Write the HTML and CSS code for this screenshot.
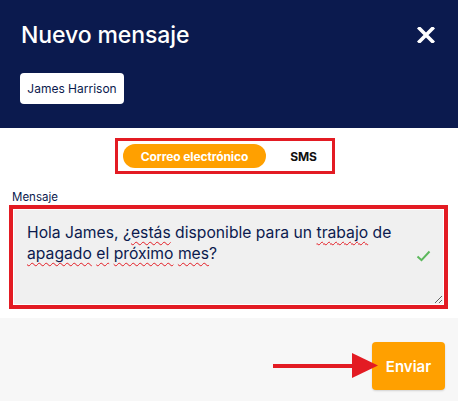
FILE: index.html
```html
<!DOCTYPE html>
<html lang="es">
<head>
<meta charset="utf-8">
<link rel="stylesheet" href="styles.css">
</head>
<body>
<div class="modal">
  <header class="head">
    <div class="head-row">
      <h1 class="title">Nuevo mensaje</h1>
      <svg class="close" width="18" height="16" viewBox="0 0 18 16"><path d="M2.5 1.5 L15.5 14.5 M15.5 1.5 L2.5 14.5" stroke="#fff" stroke-width="3.6" stroke-linecap="square"/></svg>
    </div>
    <span class="chip">James Harrison</span>
  </header>
  <div class="toggle-wrap">
    <div class="toggle">
      <span class="opt active">Correo electrónico</span>
      <span class="opt sms">SMS</span>
    </div>
  </div>
  <div class="field">
    <label class="label">Mensaje</label>
    <div class="area-outline">
      <div class="area">Hola James, ¿<span class="sp">estás</span> disponible para un <span class="sp">trabajo</span> de <span class="sp">apagado</span> <span class="sp">el</span> <span class="sp">próximo</span> <span class="sp">mes</span>?
        <svg class="check" width="15" height="12" viewBox="0 0 15 12"><path d="M1.5 6.5 L5.5 10.2 L13.5 1.5" fill="none" stroke="#5cb85c" stroke-width="2"/></svg>
      </div>
    </div>
  </div>
  <footer class="foot">
    <svg class="arrow" width="106" height="26" viewBox="0 0 106 26"><rect x="0" y="11" width="82" height="4" fill="#e31b23"/><polygon points="79,0 105,12.5 79,25" fill="#e31b23"/></svg>
    <button class="send">Enviar</button>
  </footer>
</div>
</body>
</html>
```
FILE: styles.css
```css
* { box-sizing: border-box; }
html, body { margin: 0; padding: 0; }
body {
  width: 458px;
  height: 401px;
  background: #fff;
  font-family: Inter, "Noto Sans", sans-serif;
  overflow: hidden;
}
.modal { display: flex; flex-direction: column; height: 401px; }
.head {
  background: #0b1a4e;
  height: 128px;
  padding: 21px 21px 0 21px;
  display: flex;
  flex-direction: column;
  align-items: flex-start;
}
.head-row {
  width: 100%;
  display: flex;
  justify-content: space-between;
  align-items: center;
}
.title {
  margin: 0;
  color: #fff;
  font-size: 23px;
  font-weight: 500;
  line-height: 28px;
  letter-spacing: -0.1px;
}
.close { margin-right: 2px; }
.chip {
  margin-top: 24px;
  margin-left: -1px;
  background: #fff;
  color: #0b1a4e;
  font-size: 12px;
  border-radius: 4px;
  height: 31px;
  width: 104px;
  display: flex;
  align-items: center;
  justify-content: center;
}
.toggle-wrap {
  display: flex;
  justify-content: center;
  padding-top: 10px;
  padding-right: 8px;
}
.toggle {
  border: 3px solid #e31b23;
  width: 220px;
  height: 36px;
  padding: 3px 5px;
  display: flex;
  align-items: center;
}
.opt {
  font-size: 12px;
  font-weight: 700;
  color: #111;
  height: 24px;
  display: flex;
  align-items: center;
  justify-content: center;
  flex: 1;
  letter-spacing: -0.1px;
}
.opt.sms { padding-left: 14px; }
.opt.active {
  flex: 0 0 143px;
  background: #ffa000;
  color: #fff;
  border-radius: 12px;
}
.field { padding: 16px 10px 0 9px; }
.label {
  display: block;
  font-size: 11.5px;
  color: #0b1a4e;
  margin-left: 3px;
  line-height: 14px;
  margin-bottom: 1px;
}
.area-outline {
  border: 4px solid #e31b23;
  height: 104px;
}
.area {
  position: relative;
  height: 96px;
  background: #f0f0f0;
  border: 1px solid #fff;
  padding: 12px 40px 0 13px;
  font-size: 15.7px;
  line-height: 21px;
  color: #0b1a4e;
  resize: both;
  overflow: hidden;
}
.sp {
  text-decoration: underline wavy #e31b23;
  text-decoration-thickness: 1px;
  text-underline-offset: 3px;
}
.check { position: absolute; right: 12px; top: 40px; }
.foot {
  margin-top: 9px;
  flex: 1;
  background: #f7f7f7;
  display: flex;
  justify-content: flex-end;
  align-items: flex-start;
  padding: 24px 13px 0 0;
}
.arrow {
  position: relative;
  z-index: 1;
  margin-top: 11px;
  margin-right: -7px;
}
.send {
  width: 73px;
  height: 48px;
  background: #ffa000;
  color: #fff;
  border: none;
  border-radius: 4px;
  font-family: inherit;
  font-size: 15px;
  font-weight: 600;
  box-shadow: 0 1px 2px rgba(0,0,0,0.15);
}
```
